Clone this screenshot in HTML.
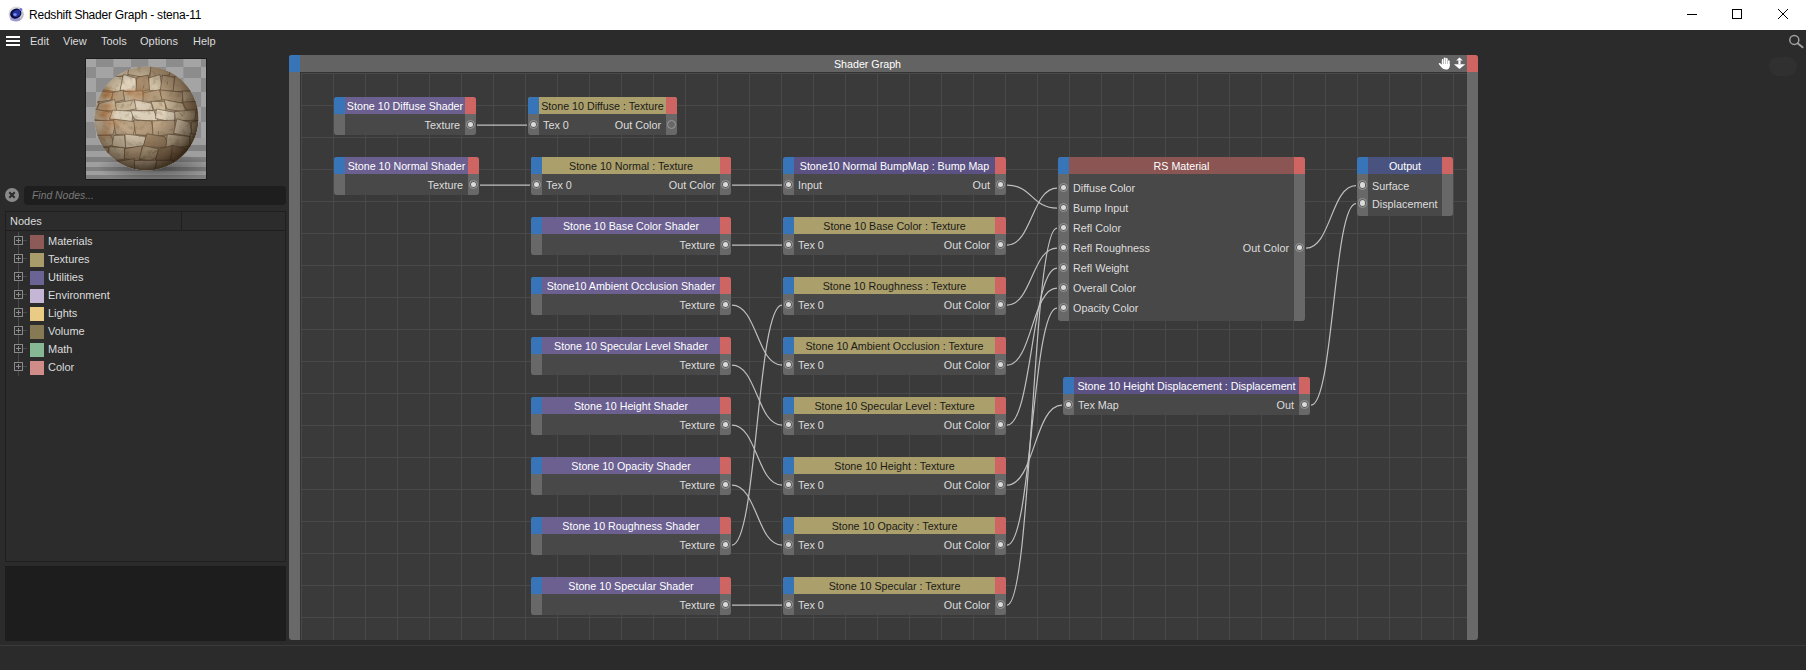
<!DOCTYPE html>
<html><head><meta charset="utf-8"><style>
*{box-sizing:border-box;margin:0;padding:0}
html,body{width:1806px;height:670px;overflow:hidden;background:#2b2b2b;font-family:"Liberation Sans", sans-serif;}
.abs{position:absolute}
#title{position:absolute;left:0;top:0;width:1806px;height:30px;background:#fff}
#title .t{position:absolute;left:29px;top:8px;font-size:12px;letter-spacing:-0.22px;color:#000;white-space:nowrap;line-height:15px}
#menu span{position:absolute;top:34px;font-size:11px;color:#dcdcdc;line-height:14px}
#prev{position:absolute;left:86px;top:59px;width:120px;height:120px;overflow:hidden;background:#8a8a8a;outline:1px solid #1c1c1c}
#search{position:absolute;left:24px;top:186px;width:262px;height:19px;background:#1e1e1e;border-radius:4px}
#search span{position:absolute;left:8px;top:2px;font-size:10.4px;font-style:italic;color:#7a7a7a;line-height:15px}
#tree{position:absolute;left:5px;top:211px;width:281px;height:351px;background:#2c2c2c;border:1px solid #1f1f1f}
#treehd{position:absolute;left:0;top:0;width:279px;height:19px;border-bottom:1px solid #1f1f1f}
#treehd span{position:absolute;left:4px;top:2px;font-size:11px;color:#dcdcdc;line-height:15px}
#treehd b{position:absolute;left:175px;top:0;width:1px;height:19px;background:#1f1f1f}
.ti{position:absolute;left:0;width:270px;height:18px}
.ti .ex{position:absolute;left:8px;top:4px;width:9px;height:9px;border:1px solid #8a8a8a;background:#2c2c2c}
.ti .ex::before{content:"";position:absolute;left:1px;top:3px;width:5px;height:1px;background:#8a8a8a}
.ti .ex::after{content:"";position:absolute;left:3px;top:1px;width:1px;height:5px;background:#8a8a8a}
.ti .vl{position:absolute;left:12px;top:0;width:1px;height:18px;background:#4a4a4a}
.ti .hl{position:absolute;left:17px;top:8px;width:4px;height:1px;background:#4a4a4a}
.ti .sw{position:absolute;left:24px;top:3px;width:14px;height:14px}
.ti span{position:absolute;left:42px;top:2px;font-size:11px;color:#dcdcdc;line-height:15px}
#bpanel{position:absolute;left:5px;top:566px;width:281px;height:75px;background:#1d1d1d}
#graph{position:absolute;left:289px;top:55px;width:1189px;height:585px;background:#696969;border-radius:3px;overflow:hidden}
#ghd{position:absolute;left:0;top:0;width:1189px;height:17px;background:#636363}
#ghd span{position:absolute;left:0;width:1157px;text-align:center;top:2px;font-size:10.7px;color:#fff;line-height:15px}
#gbl{position:absolute;left:0;top:0;width:11px;height:17px;background:#3875b8}
#grd{position:absolute;left:11px;top:17px;width:1167px;height:568px;background-color:#3a3a3a;
 background-image:linear-gradient(to right,#494949 1px,transparent 1px),linear-gradient(to bottom,#494949 1px,transparent 1px);
 background-size:32px 32px;background-position:1px 1px}
#grd .bt{position:absolute;left:0;top:0;width:100%;height:1px;background:#333}
#grd .bll{position:absolute;left:0;top:0;width:1px;height:100%;background:#333}
#wires{position:absolute;left:0;top:0;width:1167px;height:568px}
#wires path{fill:none;stroke:#c0c0c0;stroke-width:1.2}
.nd{position:absolute;border-radius:3px;overflow:hidden;background:#484848}
.hd{position:absolute;left:0;top:0;width:100%;height:17px;font-size:10.7px;line-height:17px;text-align:center;white-space:nowrap}
.hd span{position:absolute;left:11px;right:11px;top:1px;text-align:center}
.hd .bl{position:absolute;left:0;top:0;width:11px;height:17px;background:#3875b8}
.hd .rd{position:absolute;right:0;top:0;width:11px;height:17px;background:#cf6563}
.bd{position:absolute;left:0;top:17px;width:100%;background:#484848}
.bd .ls{position:absolute;left:0;top:0;width:11px;height:100%;background:#686868}
.bd .rs{position:absolute;right:0;top:0;width:11px;height:100%;background:#686868}
.lt{position:absolute;left:15px;font-size:10.8px;color:#dedede;white-space:nowrap}
.rt{position:absolute;right:16px;font-size:10.8px;color:#dedede;white-space:nowrap}
.pt{position:absolute;width:9.6px;height:9.6px;border-radius:50%;border:1px solid #9a9a9a;background:#5a5a5a}
.pt::after{content:"";position:absolute;left:1.05px;top:1.05px;width:5.5px;height:5.5px;border-radius:50%;background:#dadada}
.pt.hol{background:transparent}
.pt.hol::after{display:none}
</style></head><body>
<div id="title">
 <svg class="abs" style="left:4px;top:4px" width="24" height="24" viewBox="4 4 24 24"><defs><radialGradient id="c4g" cx="0.45" cy="0.35" r="0.7"><stop offset="0" stop-color="#f4f4f8"/><stop offset="0.7" stop-color="#c8c8d4"/><stop offset="1" stop-color="#9a9ab0"/></radialGradient></defs>
<circle cx="16.2" cy="14" r="7.6" fill="url(#c4g)"/>
<ellipse cx="15.2" cy="19" rx="5" ry="2.2" fill="#8a80d8" opacity="0.6"/>
<ellipse cx="15.8" cy="13.6" rx="5.8" ry="4.9" fill="#0c0c3a" transform="rotate(-25 15.8 13.6)"/>
<ellipse cx="16.4" cy="13.4" rx="3.9" ry="3.3" fill="#2233a0" transform="rotate(-25 16.4 13.4)"/>
<ellipse cx="15" cy="14.6" rx="1.8" ry="1.3" fill="#7f90f0"/>
<circle cx="20.8" cy="9.6" r="1.5" fill="#6c74d4"/>
</svg>
 <span class="t">Redshift Shader Graph - stena-11</span>
 <svg class="abs" style="left:1680px;top:0" width="126" height="30">
  <line x1="7" y1="14.5" x2="17" y2="14.5" stroke="#000" stroke-width="1"/>
  <rect x="52.5" y="9.5" width="9" height="9" stroke="#000" fill="none" stroke-width="1"/>
  <path d="M98,9 L108,19 M108,9 L98,19" stroke="#000" stroke-width="1"/>
 </svg>
</div>
<div id="menu">
 <svg class="abs" style="left:6px;top:36px" width="14" height="11"><rect x="0" y="0" width="14" height="2" fill="#fff"/><rect x="0" y="4" width="14" height="2" fill="#fff"/><rect x="0" y="8" width="14" height="2" fill="#fff"/></svg>
 <span style="left:30px">Edit</span><span style="left:63px">View</span><span style="left:101px">Tools</span><span style="left:140px">Options</span><span style="left:193px">Help</span>
</div>
<div id="prev"><svg width="120" height="120" viewBox="0 0 120 120" style="position:absolute;left:0;top:0"><defs><clipPath id="sph"><circle cx="60.5" cy="59.5" r="52"/></clipPath><filter id="bl" x="-5%" y="-5%" width="110%" height="110%"><feGaussianBlur stdDeviation="0.7"/></filter><filter id="bl2"><feGaussianBlur stdDeviation="0.5"/></filter><radialGradient id="shade" cx="0.42" cy="0.38" r="0.62"><stop offset="0" stop-color="#ffffff" stop-opacity="0.12"/><stop offset="0.4" stop-color="#000000" stop-opacity="0"/><stop offset="0.7" stop-color="#201408" stop-opacity="0.3"/><stop offset="0.9" stop-color="#201408" stop-opacity="0.6"/><stop offset="1" stop-color="#201408" stop-opacity="0.8"/></radialGradient><radialGradient id="shad" cx="0.5" cy="0.5" r="0.5"><stop offset="0" stop-color="#000" stop-opacity="0.45"/><stop offset="1" stop-color="#000" stop-opacity="0"/></radialGradient><filter id="nz" x="0" y="0" width="100%" height="100%"><feTurbulence type="fractalNoise" baseFrequency="0.18" numOctaves="3" seed="5"/><feColorMatrix type="matrix" values="0 0 0 0 0.25  0 0 0 0 0.17  0 0 0 0 0.1  -2.2 0 0 0 1.05"/></filter><radialGradient id="rust" cx="0.5" cy="0.5" r="0.5"><stop offset="0" stop-color="#a8642c" stop-opacity="0.55"/><stop offset="1" stop-color="#a8642c" stop-opacity="0"/></radialGradient></defs><g filter="url(#bl2)"><rect x="-5" y="-5" width="130" height="130" fill="#989898"/><rect x="-7.5" y="-5" width="17.5" height="13" fill="#a4a4a4"/><rect x="10.0" y="-5" width="17.5" height="13" fill="#8c8c8c"/><rect x="27.5" y="-5" width="17.5" height="13" fill="#a4a4a4"/><rect x="45.0" y="-5" width="17.5" height="13" fill="#8c8c8c"/><rect x="62.5" y="-5" width="17.5" height="13" fill="#a4a4a4"/><rect x="80.0" y="-5" width="17.5" height="13" fill="#8c8c8c"/><rect x="97.5" y="-5" width="17.5" height="13" fill="#a4a4a4"/><rect x="115.0" y="-5" width="17.5" height="13" fill="#8c8c8c"/><rect x="132.5" y="-5" width="17.5" height="13" fill="#a4a4a4"/><rect x="-7.5" y="8" width="17.5" height="11" fill="#8c8c8c"/><rect x="10.0" y="8" width="17.5" height="11" fill="#a4a4a4"/><rect x="27.5" y="8" width="17.5" height="11" fill="#8c8c8c"/><rect x="45.0" y="8" width="17.5" height="11" fill="#a4a4a4"/><rect x="62.5" y="8" width="17.5" height="11" fill="#8c8c8c"/><rect x="80.0" y="8" width="17.5" height="11" fill="#a4a4a4"/><rect x="97.5" y="8" width="17.5" height="11" fill="#8c8c8c"/><rect x="115.0" y="8" width="17.5" height="11" fill="#a4a4a4"/><rect x="132.5" y="8" width="17.5" height="11" fill="#8c8c8c"/><rect x="-7.5" y="19" width="17.5" height="14" fill="#a4a4a4"/><rect x="10.0" y="19" width="17.5" height="14" fill="#8c8c8c"/><rect x="27.5" y="19" width="17.5" height="14" fill="#a4a4a4"/><rect x="45.0" y="19" width="17.5" height="14" fill="#8c8c8c"/><rect x="62.5" y="19" width="17.5" height="14" fill="#a4a4a4"/><rect x="80.0" y="19" width="17.5" height="14" fill="#8c8c8c"/><rect x="97.5" y="19" width="17.5" height="14" fill="#a4a4a4"/><rect x="115.0" y="19" width="17.5" height="14" fill="#8c8c8c"/><rect x="132.5" y="19" width="17.5" height="14" fill="#a4a4a4"/><rect x="-7.5" y="33" width="17.5" height="15" fill="#8c8c8c"/><rect x="10.0" y="33" width="17.5" height="15" fill="#a4a4a4"/><rect x="27.5" y="33" width="17.5" height="15" fill="#8c8c8c"/><rect x="45.0" y="33" width="17.5" height="15" fill="#a4a4a4"/><rect x="62.5" y="33" width="17.5" height="15" fill="#8c8c8c"/><rect x="80.0" y="33" width="17.5" height="15" fill="#a4a4a4"/><rect x="97.5" y="33" width="17.5" height="15" fill="#8c8c8c"/><rect x="115.0" y="33" width="17.5" height="15" fill="#a4a4a4"/><rect x="132.5" y="33" width="17.5" height="15" fill="#8c8c8c"/><rect x="-7.5" y="48" width="17.5" height="15" fill="#a4a4a4"/><rect x="10.0" y="48" width="17.5" height="15" fill="#8c8c8c"/><rect x="27.5" y="48" width="17.5" height="15" fill="#a4a4a4"/><rect x="45.0" y="48" width="17.5" height="15" fill="#8c8c8c"/><rect x="62.5" y="48" width="17.5" height="15" fill="#a4a4a4"/><rect x="80.0" y="48" width="17.5" height="15" fill="#8c8c8c"/><rect x="97.5" y="48" width="17.5" height="15" fill="#a4a4a4"/><rect x="115.0" y="48" width="17.5" height="15" fill="#8c8c8c"/><rect x="132.5" y="48" width="17.5" height="15" fill="#a4a4a4"/><rect x="-7.5" y="63" width="17.5" height="16" fill="#8c8c8c"/><rect x="10.0" y="63" width="17.5" height="16" fill="#a4a4a4"/><rect x="27.5" y="63" width="17.5" height="16" fill="#8c8c8c"/><rect x="45.0" y="63" width="17.5" height="16" fill="#a4a4a4"/><rect x="62.5" y="63" width="17.5" height="16" fill="#8c8c8c"/><rect x="80.0" y="63" width="17.5" height="16" fill="#a4a4a4"/><rect x="97.5" y="63" width="17.5" height="16" fill="#8c8c8c"/><rect x="115.0" y="63" width="17.5" height="16" fill="#a4a4a4"/><rect x="132.5" y="63" width="17.5" height="16" fill="#8c8c8c"/><rect x="-5" y="79" width="130" height="7" fill="#9f9f9f"/><rect x="-5" y="86" width="130" height="6" fill="#808080"/><rect x="-5" y="92" width="130" height="6" fill="#9f9f9f"/><rect x="-5" y="98" width="130" height="5" fill="#808080"/><rect x="-5" y="103" width="130" height="5" fill="#9f9f9f"/><rect x="-5" y="108" width="130" height="4" fill="#808080"/><rect x="-5" y="112" width="130" height="4" fill="#9f9f9f"/><rect x="-5" y="116" width="130" height="4" fill="#808080"/><rect x="-5" y="120" width="130" height="5" fill="#9f9f9f"/><ellipse cx="70.5" cy="108.5" rx="60" ry="15" fill="url(#shad)"/></g><g clip-path="url(#sph)"><g filter="url(#bl)"><rect x="0" y="0" width="120" height="120" fill="#b9a486"/><polygon points="1.6,5.5 25.2,5.5 24.5,16.0 1.9,18.5" fill="#cfbd9f" stroke="#54402c" stroke-width="0.8" stroke-opacity="0.7"/><polygon points="25.3,4.2 42.4,6.8 42.8,15.8 24.4,18.6" fill="#cfbd9f" stroke="#54402c" stroke-width="0.8" stroke-opacity="0.7"/><polygon points="43.4,3.7 66.2,7.3 62.4,19.1 41.8,15.4" fill="#c7b396" stroke="#54402c" stroke-width="0.8" stroke-opacity="0.7"/><polygon points="64.8,6.8 82.4,4.2 85.8,15.4 63.8,19.1" fill="#b59c7c" stroke="#54402c" stroke-width="0.8" stroke-opacity="0.7"/><polygon points="85.2,4.8 103.7,6.2 102.9,16.0 83.0,18.4" fill="#b59c7c" stroke="#54402c" stroke-width="0.8" stroke-opacity="0.7"/><polygon points="103.3,6.1 122.8,4.9 123.1,16.3 103.3,18.1" fill="#cfbd9f" stroke="#54402c" stroke-width="0.8" stroke-opacity="0.7"/><polygon points="-2.3,16.1 18.1,18.3 19.8,30.5 -0.8,33.9" fill="#c4b091" stroke="#54402c" stroke-width="0.8" stroke-opacity="0.7"/><polygon points="20.3,16.8 37.5,17.7 33.9,33.6 17.5,30.8" fill="#d2c2a6" stroke="#54402c" stroke-width="0.8" stroke-opacity="0.7"/><polygon points="37.4,15.4 49.8,19.0 50.8,33.0 34.0,31.4" fill="#e0d3bc" stroke="#54402c" stroke-width="0.8" stroke-opacity="0.7"/><polygon points="50.8,18.3 62.2,16.1 64.1,30.5 49.8,33.8" fill="#a98d6d" stroke="#54402c" stroke-width="0.8" stroke-opacity="0.7"/><polygon points="62.8,18.9 73.9,15.5 76.8,33.0 63.5,31.4" fill="#d2c2a6" stroke="#54402c" stroke-width="0.8" stroke-opacity="0.7"/><polygon points="76.5,15.9 88.3,18.5 87.8,32.0 74.1,32.4" fill="#b59c7c" stroke="#54402c" stroke-width="0.8" stroke-opacity="0.7"/><polygon points="89.1,16.9 111.4,17.5 112.3,31.8 87.0,32.6" fill="#b59c7c" stroke="#54402c" stroke-width="0.8" stroke-opacity="0.7"/><polygon points="113.3,19.1 124.3,15.3 123.5,34.2 110.4,30.2" fill="#d2c2a6" stroke="#54402c" stroke-width="0.8" stroke-opacity="0.7"/><polygon points="4.3,30.6 28.0,33.8 24.1,41.3 3.2,43.6" fill="#cbb899" stroke="#54402c" stroke-width="0.8" stroke-opacity="0.7"/><polygon points="26.5,33.5 37.7,30.9 38.6,40.7 25.6,44.2" fill="#b59c7c" stroke="#54402c" stroke-width="0.8" stroke-opacity="0.7"/><polygon points="37.1,32.6 56.6,31.8 57.6,42.3 39.2,42.6" fill="#c7b396" stroke="#54402c" stroke-width="0.8" stroke-opacity="0.7"/><polygon points="57.4,33.7 73.7,30.7 76.2,41.1 56.8,43.8" fill="#b59c7c" stroke="#54402c" stroke-width="0.8" stroke-opacity="0.7"/><polygon points="73.9,30.9 97.7,33.4 95.8,44.2 75.9,40.7" fill="#b59c7c" stroke="#54402c" stroke-width="0.8" stroke-opacity="0.7"/><polygon points="96.3,32.1 115.3,32.3 118.7,40.6 97.2,44.3" fill="#c4b091" stroke="#54402c" stroke-width="0.8" stroke-opacity="0.7"/><polygon points="-2.2,41.5 13.1,43.4 10.5,52.1 -3.9,51.3" fill="#cbb899" stroke="#54402c" stroke-width="0.8" stroke-opacity="0.7"/><polygon points="13.5,44.4 28.6,40.5 31.5,51.6 10.1,51.8" fill="#c7b396" stroke="#54402c" stroke-width="0.8" stroke-opacity="0.7"/><polygon points="29.2,44.1 48.2,40.8 50.6,49.8 30.9,53.6" fill="#cbb899" stroke="#54402c" stroke-width="0.8" stroke-opacity="0.7"/><polygon points="48.4,40.6 65.5,44.3 67.2,51.8 50.4,51.6" fill="#dacbb2" stroke="#54402c" stroke-width="0.8" stroke-opacity="0.7"/><polygon points="64.9,42.3 78.8,42.7 80.1,52.6 67.8,50.8" fill="#cfbd9f" stroke="#54402c" stroke-width="0.8" stroke-opacity="0.7"/><polygon points="78.0,40.6 96.5,44.3 100.4,53.3 80.9,50.0" fill="#cbb899" stroke="#54402c" stroke-width="0.8" stroke-opacity="0.7"/><polygon points="96.6,43.0 122.0,41.9 122.1,52.6 100.4,50.8" fill="#a98d6d" stroke="#54402c" stroke-width="0.8" stroke-opacity="0.7"/><polygon points="7.1,49.9 26.8,53.5 23.3,62.5 8.2,60.6" fill="#dacbb2" stroke="#54402c" stroke-width="0.8" stroke-opacity="0.7"/><polygon points="26.7,51.1 47.3,52.3 45.8,63.1 23.4,59.9" fill="#e0d3bc" stroke="#54402c" stroke-width="0.8" stroke-opacity="0.7"/><polygon points="44.7,51.7 68.0,51.7 71.9,62.2 48.5,60.9" fill="#e0d3bc" stroke="#54402c" stroke-width="0.8" stroke-opacity="0.7"/><polygon points="70.4,50.0 89.5,53.4 88.4,63.5 69.5,59.5" fill="#e0d3bc" stroke="#54402c" stroke-width="0.8" stroke-opacity="0.7"/><polygon points="88.5,52.6 110.0,50.7 109.3,61.3 89.4,61.7" fill="#cfbd9f" stroke="#54402c" stroke-width="0.8" stroke-opacity="0.7"/><polygon points="110.6,49.8 123.1,53.6 122.2,61.4 108.6,61.6" fill="#b59c7c" stroke="#54402c" stroke-width="0.8" stroke-opacity="0.7"/><polygon points="7.8,61.4 30.1,61.6 26.9,75.7 6.5,76.8" fill="#dacbb2" stroke="#54402c" stroke-width="0.8" stroke-opacity="0.7"/><polygon points="27.3,60.2 50.3,62.8 47.0,76.9 29.7,75.6" fill="#bea586" stroke="#54402c" stroke-width="0.8" stroke-opacity="0.7"/><polygon points="47.6,61.1 65.6,61.9 67.6,76.8 49.7,75.7" fill="#b59c7c" stroke="#54402c" stroke-width="0.8" stroke-opacity="0.7"/><polygon points="66.2,61.8 88.5,61.2 89.9,74.8 67.1,77.7" fill="#bea586" stroke="#54402c" stroke-width="0.8" stroke-opacity="0.7"/><polygon points="90.8,59.7 103.7,63.3 107.1,78.2 87.6,74.3" fill="#dacbb2" stroke="#54402c" stroke-width="0.8" stroke-opacity="0.7"/><polygon points="105.3,63.2 120.1,59.8 117.4,75.8 105.5,76.7" fill="#cfbd9f" stroke="#54402c" stroke-width="0.8" stroke-opacity="0.7"/><polygon points="6.6,76.1 25.1,76.4 28.5,86.3 2.8,90.1" fill="#c7b396" stroke="#54402c" stroke-width="0.8" stroke-opacity="0.7"/><polygon points="27.6,76.5 38.5,76.0 40.0,89.4 26.0,87.0" fill="#d2c2a6" stroke="#54402c" stroke-width="0.8" stroke-opacity="0.7"/><polygon points="38.9,75.0 60.1,77.5 57.9,87.3 39.7,89.1" fill="#dacbb2" stroke="#54402c" stroke-width="0.8" stroke-opacity="0.7"/><polygon points="60.9,74.7 79.0,77.8 82.1,88.4 57.0,88.1" fill="#a98d6d" stroke="#54402c" stroke-width="0.8" stroke-opacity="0.7"/><polygon points="81.3,75.0 103.9,77.5 104.1,86.9 79.8,89.5" fill="#d2c2a6" stroke="#54402c" stroke-width="0.8" stroke-opacity="0.7"/><polygon points="104.2,74.4 124.0,78.1 126.2,89.3 103.9,87.1" fill="#cfbd9f" stroke="#54402c" stroke-width="0.8" stroke-opacity="0.7"/><polygon points="3.3,87.8 22.8,88.6 20.5,103.0 1.2,99.8" fill="#c4b091" stroke="#54402c" stroke-width="0.8" stroke-opacity="0.7"/><polygon points="23.2,87.8 38.4,88.7 38.8,100.2 20.1,102.6" fill="#d2c2a6" stroke="#54402c" stroke-width="0.8" stroke-opacity="0.7"/><polygon points="38.8,89.7 56.3,86.7 53.9,103.2 38.3,99.6" fill="#bea586" stroke="#54402c" stroke-width="0.8" stroke-opacity="0.7"/><polygon points="57.0,86.6 72.5,89.8 69.5,102.6 53.1,100.2" fill="#c4b091" stroke="#54402c" stroke-width="0.8" stroke-opacity="0.7"/><polygon points="72.6,90.1 87.5,86.3 83.6,101.5 69.4,101.2" fill="#a98d6d" stroke="#54402c" stroke-width="0.8" stroke-opacity="0.7"/><polygon points="86.4,86.3 100.7,90.1 100.7,99.5 84.7,103.2" fill="#a98d6d" stroke="#54402c" stroke-width="0.8" stroke-opacity="0.7"/><polygon points="101.8,88.2 117.4,88.3 121.2,102.6 99.6,100.2" fill="#c4b091" stroke="#54402c" stroke-width="0.8" stroke-opacity="0.7"/><polygon points="8.8,103.1 26.4,99.7 26.6,115.0 7.3,111.0" fill="#cfbd9f" stroke="#54402c" stroke-width="0.8" stroke-opacity="0.7"/><polygon points="27.2,103.2 48.5,99.6 48.6,114.8 25.7,111.2" fill="#c4b091" stroke="#54402c" stroke-width="0.8" stroke-opacity="0.7"/><polygon points="48.3,101.6 71.0,101.2 68.3,113.2 48.8,112.7" fill="#dacbb2" stroke="#54402c" stroke-width="0.8" stroke-opacity="0.7"/><polygon points="71.0,101.6 87.2,101.2 88.7,112.5 68.3,113.4" fill="#c7b396" stroke="#54402c" stroke-width="0.8" stroke-opacity="0.7"/><polygon points="89.3,103.3 102.5,99.5 102.3,113.3 86.5,112.7" fill="#b59c7c" stroke="#54402c" stroke-width="0.8" stroke-opacity="0.7"/><polygon points="100.9,99.4 118.9,103.4 119.8,113.1 104.0,112.8" fill="#d2c2a6" stroke="#54402c" stroke-width="0.8" stroke-opacity="0.7"/><line x1="61.9" y1="50.6" x2="66.8" y2="51.3" stroke="#5a4532" stroke-width="0.7" opacity="0.6"/><line x1="59.7" y1="76.7" x2="52.7" y2="77.2" stroke="#5a4532" stroke-width="0.7" opacity="0.6"/><line x1="52.7" y1="100.6" x2="59.5" y2="97.8" stroke="#5a4532" stroke-width="0.7" opacity="0.6"/><line x1="58.1" y1="25.9" x2="57.0" y2="29.7" stroke="#5a4532" stroke-width="0.7" opacity="0.6"/><line x1="96.5" y1="57.4" x2="93.6" y2="53.7" stroke="#5a4532" stroke-width="0.7" opacity="0.6"/><line x1="71.1" y1="97.8" x2="65.2" y2="101.1" stroke="#5a4532" stroke-width="0.7" opacity="0.6"/><line x1="17.6" y1="32.0" x2="13.2" y2="34.2" stroke="#5a4532" stroke-width="0.7" opacity="0.6"/><line x1="44.5" y1="46.5" x2="46.4" y2="41.7" stroke="#5a4532" stroke-width="0.7" opacity="0.6"/><line x1="81.3" y1="25.6" x2="81.4" y2="22.6" stroke="#5a4532" stroke-width="0.7" opacity="0.6"/><line x1="33.3" y1="62.2" x2="32.3" y2="60.7" stroke="#5a4532" stroke-width="0.7" opacity="0.6"/><line x1="52.7" y1="62.1" x2="47.3" y2="58.6" stroke="#5a4532" stroke-width="0.7" opacity="0.6"/><line x1="72.3" y1="72.0" x2="72.8" y2="76.2" stroke="#5a4532" stroke-width="0.7" opacity="0.6"/><line x1="70.6" y1="91.6" x2="66.3" y2="94.5" stroke="#5a4532" stroke-width="0.7" opacity="0.6"/><line x1="88.4" y1="95.7" x2="85.5" y2="93.5" stroke="#5a4532" stroke-width="0.7" opacity="0.6"/><ellipse cx="52.4" cy="35.2" rx="13.0" ry="8.4" fill="url(#rust)"/><ellipse cx="20.9" cy="36.6" rx="11.1" ry="5.3" fill="url(#rust)"/><ellipse cx="19.4" cy="73.9" rx="9.0" ry="7.9" fill="url(#rust)"/><ellipse cx="20.5" cy="46.9" rx="10.8" ry="4.1" fill="url(#rust)"/><ellipse cx="23.5" cy="64.5" rx="12.4" ry="8.8" fill="url(#rust)"/><ellipse cx="20.1" cy="53.4" rx="11.3" ry="6.5" fill="url(#rust)"/><ellipse cx="42.9" cy="33.4" rx="6.5" ry="4.5" fill="url(#rust)"/><ellipse cx="17.0" cy="56.3" rx="9.6" ry="6.8" fill="url(#rust)"/><ellipse cx="21.4" cy="33.1" rx="7.4" ry="8.2" fill="url(#rust)"/><rect x="0" y="0" width="120" height="120" filter="url(#nz)" opacity="0.55"/><circle cx="60.5" cy="59.5" r="52" fill="url(#shade)"/></g></g></svg></div>
<svg class="abs" style="left:4px;top:187px" width="16" height="16"><circle cx="8" cy="8" r="7" fill="#8a8a8a"/><path d="M5.3,5.3 L10.7,10.7 M10.7,5.3 L5.3,10.7" stroke="#2b2b2b" stroke-width="2"/></svg>
<div id="search"><span>Find Nodes...</span></div>
<div id="tree"><div id="treehd"><span>Nodes</span><b></b></div>
<div class="ti" style="top:20px"><i class="vl"></i><i class="hl"></i><i class="ex"></i><i class="sw" style="background:#8e5a58"></i><span>Materials</span></div>
<div class="ti" style="top:38px"><i class="vl"></i><i class="hl"></i><i class="ex"></i><i class="sw" style="background:#a89c6a"></i><span>Textures</span></div>
<div class="ti" style="top:56px"><i class="vl"></i><i class="hl"></i><i class="ex"></i><i class="sw" style="background:#6a6494"></i><span>Utilities</span></div>
<div class="ti" style="top:74px"><i class="vl"></i><i class="hl"></i><i class="ex"></i><i class="sw" style="background:#c6b6d6"></i><span>Environment</span></div>
<div class="ti" style="top:92px"><i class="vl"></i><i class="hl"></i><i class="ex"></i><i class="sw" style="background:#e9cb86"></i><span>Lights</span></div>
<div class="ti" style="top:110px"><i class="vl"></i><i class="hl"></i><i class="ex"></i><i class="sw" style="background:#857a54"></i><span>Volume</span></div>
<div class="ti" style="top:128px"><i class="vl"></i><i class="hl"></i><i class="ex"></i><i class="sw" style="background:#86b896"></i><span>Math</span></div>
<div class="ti" style="top:146px"><i class="vl"></i><i class="hl"></i><i class="ex"></i><i class="sw" style="background:#cf8c88"></i><span>Color</span></div>
</div>
<div id="bpanel"></div>
<div id="graph">
 <div id="ghd"><span>Shader Graph</span></div>
 <div id="gbl"></div>
 <div class="abs" style="left:1178px;top:0;width:11px;height:17px;background:#cf6563"></div>
 <div id="grd"><b class="bt"></b><b class="bll"></b>
  <svg id="wires" width="1167" height="568">
<path d="M177.0,53.1 C202.0,53.1 202.0,53.1 227.0,53.1"/>
<path d="M180.0,113.1 C205.0,113.1 205.0,113.1 230.0,113.1"/>
<path d="M432.0,113.1 C457.0,113.1 457.0,113.1 482.0,113.1"/>
<path d="M707.0,113.1 C732.0,113.1 732.0,136.1 757.0,136.1"/>
<path d="M432.0,173.1 C457.0,173.1 457.0,173.1 482.0,173.1"/>
<path d="M707.0,173.1 C732.0,173.1 732.0,116.1 757.0,116.1"/>
<path d="M432.0,233.1 C457.0,233.1 457.0,293.1 482.0,293.1"/>
<path d="M432.0,293.1 C457.0,293.1 457.0,353.1 482.0,353.1"/>
<path d="M432.0,353.1 C457.0,353.1 457.0,413.1 482.0,413.1"/>
<path d="M432.0,413.1 C457.0,413.1 457.0,473.1 482.0,473.1"/>
<path d="M432.0,473.1 C457.0,473.1 457.0,233.1 482.0,233.1"/>
<path d="M432.0,533.1 C457.0,533.1 457.0,533.1 482.0,533.1"/>
<path d="M707.0,233.1 C732.0,233.1 732.0,176.1 757.0,176.1"/>
<path d="M707.0,293.1 C732.0,293.1 732.0,216.1 757.0,216.1"/>
<path d="M707.0,353.1 C732.0,353.1 732.0,196.1 757.0,196.1"/>
<path d="M707.0,413.1 C734.5,413.1 734.5,333.1 762.0,333.1"/>
<path d="M707.0,473.1 C732.0,473.1 732.0,236.1 757.0,236.1"/>
<path d="M707.0,533.1 C732.0,533.1 732.0,156.1 757.0,156.1"/>
<path d="M1006.0,176.1 C1031.0,176.1 1031.0,113.6 1056.0,113.6"/>
<path d="M1011.0,333.1 C1033.5,333.1 1033.5,131.6 1056.0,131.6"/>
  </svg>
<div class="nd" style="left:34px;top:25px;width:142px;height:38px"><div class="hd" style="background:#6b6090;color:#ffffff"><b class="bl"></b><span>Stone 10 Diffuse Shader</span><b class="rd"></b></div><div class="bd" style="height:21px"><b class="ls"></b><b class="rs"></b><span class="rt" style="top:1.0px;height:21px;line-height:21px">Texture</span></div><i class="pt" style="left:131.7px;top:22.7px"></i></div>
<div class="nd" style="left:34px;top:85px;width:145px;height:38px"><div class="hd" style="background:#6b6090;color:#ffffff"><b class="bl"></b><span>Stone 10 Normal Shader</span><b class="rd"></b></div><div class="bd" style="height:21px"><b class="ls"></b><b class="rs"></b><span class="rt" style="top:1.0px;height:21px;line-height:21px">Texture</span></div><i class="pt" style="left:134.7px;top:22.7px"></i></div>
<div class="nd" style="left:228px;top:25px;width:149px;height:38px"><div class="hd" style="background:#ab9f6b;color:#1a1a1a"><b class="bl"></b><span>Stone 10 Diffuse : Texture</span><b class="rd"></b></div><div class="bd" style="height:21px"><b class="ls"></b><b class="rs"></b><span class="lt" style="top:1.0px;height:21px;line-height:21px">Tex 0</span><span class="rt" style="top:1.0px;height:21px;line-height:21px">Out Color</span></div><i class="pt" style="left:0.7px;top:22.7px"></i><i class="pt hol" style="left:138.7px;top:22.7px"></i></div>
<div class="nd" style="left:231px;top:85px;width:200px;height:38px"><div class="hd" style="background:#ab9f6b;color:#1a1a1a"><b class="bl"></b><span>Stone 10 Normal : Texture</span><b class="rd"></b></div><div class="bd" style="height:21px"><b class="ls"></b><b class="rs"></b><span class="lt" style="top:1.0px;height:21px;line-height:21px">Tex 0</span><span class="rt" style="top:1.0px;height:21px;line-height:21px">Out Color</span></div><i class="pt" style="left:0.7px;top:22.7px"></i><i class="pt" style="left:189.7px;top:22.7px"></i></div>
<div class="nd" style="left:231px;top:145px;width:200px;height:38px"><div class="hd" style="background:#6b6090;color:#ffffff"><b class="bl"></b><span>Stone 10 Base Color Shader</span><b class="rd"></b></div><div class="bd" style="height:21px"><b class="ls"></b><b class="rs"></b><span class="rt" style="top:1.0px;height:21px;line-height:21px">Texture</span></div><i class="pt" style="left:189.7px;top:22.7px"></i></div>
<div class="nd" style="left:231px;top:205px;width:200px;height:38px"><div class="hd" style="background:#6b6090;color:#ffffff"><b class="bl"></b><span>Stone10 Ambient Occlusion Shader</span><b class="rd"></b></div><div class="bd" style="height:21px"><b class="ls"></b><b class="rs"></b><span class="rt" style="top:1.0px;height:21px;line-height:21px">Texture</span></div><i class="pt" style="left:189.7px;top:22.7px"></i></div>
<div class="nd" style="left:231px;top:265px;width:200px;height:38px"><div class="hd" style="background:#6b6090;color:#ffffff"><b class="bl"></b><span>Stone 10 Specular Level Shader</span><b class="rd"></b></div><div class="bd" style="height:21px"><b class="ls"></b><b class="rs"></b><span class="rt" style="top:1.0px;height:21px;line-height:21px">Texture</span></div><i class="pt" style="left:189.7px;top:22.7px"></i></div>
<div class="nd" style="left:231px;top:325px;width:200px;height:38px"><div class="hd" style="background:#6b6090;color:#ffffff"><b class="bl"></b><span>Stone 10 Height Shader</span><b class="rd"></b></div><div class="bd" style="height:21px"><b class="ls"></b><b class="rs"></b><span class="rt" style="top:1.0px;height:21px;line-height:21px">Texture</span></div><i class="pt" style="left:189.7px;top:22.7px"></i></div>
<div class="nd" style="left:231px;top:385px;width:200px;height:38px"><div class="hd" style="background:#6b6090;color:#ffffff"><b class="bl"></b><span>Stone 10 Opacity Shader</span><b class="rd"></b></div><div class="bd" style="height:21px"><b class="ls"></b><b class="rs"></b><span class="rt" style="top:1.0px;height:21px;line-height:21px">Texture</span></div><i class="pt" style="left:189.7px;top:22.7px"></i></div>
<div class="nd" style="left:231px;top:445px;width:200px;height:38px"><div class="hd" style="background:#6b6090;color:#ffffff"><b class="bl"></b><span>Stone 10 Roughness Shader</span><b class="rd"></b></div><div class="bd" style="height:21px"><b class="ls"></b><b class="rs"></b><span class="rt" style="top:1.0px;height:21px;line-height:21px">Texture</span></div><i class="pt" style="left:189.7px;top:22.7px"></i></div>
<div class="nd" style="left:231px;top:505px;width:200px;height:38px"><div class="hd" style="background:#6b6090;color:#ffffff"><b class="bl"></b><span>Stone 10 Specular Shader</span><b class="rd"></b></div><div class="bd" style="height:21px"><b class="ls"></b><b class="rs"></b><span class="rt" style="top:1.0px;height:21px;line-height:21px">Texture</span></div><i class="pt" style="left:189.7px;top:22.7px"></i></div>
<div class="nd" style="left:483px;top:85px;width:223px;height:38px"><div class="hd" style="background:#5b5283;color:#ffffff"><b class="bl"></b><span>Stone10 Normal BumpMap : Bump Map</span><b class="rd"></b></div><div class="bd" style="height:21px"><b class="ls"></b><b class="rs"></b><span class="lt" style="top:1.0px;height:21px;line-height:21px">Input</span><span class="rt" style="top:1.0px;height:21px;line-height:21px">Out</span></div><i class="pt" style="left:0.7px;top:22.7px"></i><i class="pt" style="left:212.7px;top:22.7px"></i></div>
<div class="nd" style="left:483px;top:145px;width:223px;height:38px"><div class="hd" style="background:#ab9f6b;color:#1a1a1a"><b class="bl"></b><span>Stone 10 Base Color : Texture</span><b class="rd"></b></div><div class="bd" style="height:21px"><b class="ls"></b><b class="rs"></b><span class="lt" style="top:1.0px;height:21px;line-height:21px">Tex 0</span><span class="rt" style="top:1.0px;height:21px;line-height:21px">Out Color</span></div><i class="pt" style="left:0.7px;top:22.7px"></i><i class="pt" style="left:212.7px;top:22.7px"></i></div>
<div class="nd" style="left:483px;top:205px;width:223px;height:38px"><div class="hd" style="background:#ab9f6b;color:#1a1a1a"><b class="bl"></b><span>Stone 10 Roughness : Texture</span><b class="rd"></b></div><div class="bd" style="height:21px"><b class="ls"></b><b class="rs"></b><span class="lt" style="top:1.0px;height:21px;line-height:21px">Tex 0</span><span class="rt" style="top:1.0px;height:21px;line-height:21px">Out Color</span></div><i class="pt" style="left:0.7px;top:22.7px"></i><i class="pt" style="left:212.7px;top:22.7px"></i></div>
<div class="nd" style="left:483px;top:265px;width:223px;height:38px"><div class="hd" style="background:#ab9f6b;color:#1a1a1a"><b class="bl"></b><span>Stone 10 Ambient Occlusion : Texture</span><b class="rd"></b></div><div class="bd" style="height:21px"><b class="ls"></b><b class="rs"></b><span class="lt" style="top:1.0px;height:21px;line-height:21px">Tex 0</span><span class="rt" style="top:1.0px;height:21px;line-height:21px">Out Color</span></div><i class="pt" style="left:0.7px;top:22.7px"></i><i class="pt" style="left:212.7px;top:22.7px"></i></div>
<div class="nd" style="left:483px;top:325px;width:223px;height:38px"><div class="hd" style="background:#ab9f6b;color:#1a1a1a"><b class="bl"></b><span>Stone 10 Specular Level : Texture</span><b class="rd"></b></div><div class="bd" style="height:21px"><b class="ls"></b><b class="rs"></b><span class="lt" style="top:1.0px;height:21px;line-height:21px">Tex 0</span><span class="rt" style="top:1.0px;height:21px;line-height:21px">Out Color</span></div><i class="pt" style="left:0.7px;top:22.7px"></i><i class="pt" style="left:212.7px;top:22.7px"></i></div>
<div class="nd" style="left:483px;top:385px;width:223px;height:38px"><div class="hd" style="background:#ab9f6b;color:#1a1a1a"><b class="bl"></b><span>Stone 10 Height : Texture</span><b class="rd"></b></div><div class="bd" style="height:21px"><b class="ls"></b><b class="rs"></b><span class="lt" style="top:1.0px;height:21px;line-height:21px">Tex 0</span><span class="rt" style="top:1.0px;height:21px;line-height:21px">Out Color</span></div><i class="pt" style="left:0.7px;top:22.7px"></i><i class="pt" style="left:212.7px;top:22.7px"></i></div>
<div class="nd" style="left:483px;top:445px;width:223px;height:38px"><div class="hd" style="background:#ab9f6b;color:#1a1a1a"><b class="bl"></b><span>Stone 10 Opacity : Texture</span><b class="rd"></b></div><div class="bd" style="height:21px"><b class="ls"></b><b class="rs"></b><span class="lt" style="top:1.0px;height:21px;line-height:21px">Tex 0</span><span class="rt" style="top:1.0px;height:21px;line-height:21px">Out Color</span></div><i class="pt" style="left:0.7px;top:22.7px"></i><i class="pt" style="left:212.7px;top:22.7px"></i></div>
<div class="nd" style="left:483px;top:505px;width:223px;height:38px"><div class="hd" style="background:#ab9f6b;color:#1a1a1a"><b class="bl"></b><span>Stone 10 Specular : Texture</span><b class="rd"></b></div><div class="bd" style="height:21px"><b class="ls"></b><b class="rs"></b><span class="lt" style="top:1.0px;height:21px;line-height:21px">Tex 0</span><span class="rt" style="top:1.0px;height:21px;line-height:21px">Out Color</span></div><i class="pt" style="left:0.7px;top:22.7px"></i><i class="pt" style="left:212.7px;top:22.7px"></i></div>
<div class="nd" style="left:758px;top:85px;width:247px;height:164px"><div class="hd" style="background:#8a5553;color:#ffffff"><b class="bl"></b><span>RS Material</span><b class="rd"></b></div><div class="bd" style="height:147px"><b class="ls"></b><b class="rs"></b><span class="lt" style="top:3.5px;height:20px;line-height:20px">Diffuse Color</span><span class="lt" style="top:23.5px;height:20px;line-height:20px">Bump Input</span><span class="lt" style="top:43.5px;height:20px;line-height:20px">Refl Color</span><span class="lt" style="top:63.5px;height:20px;line-height:20px">Refl Roughness</span><span class="rt" style="top:63.5px;height:20px;line-height:20px">Out Color</span><span class="lt" style="top:83.5px;height:20px;line-height:20px">Refl Weight</span><span class="lt" style="top:103.5px;height:20px;line-height:20px">Overall Color</span><span class="lt" style="top:123.5px;height:20px;line-height:20px">Opacity Color</span></div><i class="pt" style="left:0.7px;top:25.7px"></i><i class="pt" style="left:0.7px;top:45.7px"></i><i class="pt" style="left:0.7px;top:65.7px"></i><i class="pt" style="left:0.7px;top:85.7px"></i><i class="pt" style="left:236.7px;top:85.7px"></i><i class="pt" style="left:0.7px;top:105.7px"></i><i class="pt" style="left:0.7px;top:125.7px"></i><i class="pt" style="left:0.7px;top:145.7px"></i></div>
<div class="nd" style="left:763px;top:305px;width:247px;height:38px"><div class="hd" style="background:#5b5283;color:#ffffff"><b class="bl"></b><span>Stone 10 Height Displacement : Displacement</span><b class="rd"></b></div><div class="bd" style="height:21px"><b class="ls"></b><b class="rs"></b><span class="lt" style="top:1.0px;height:21px;line-height:21px">Tex Map</span><span class="rt" style="top:1.0px;height:21px;line-height:21px">Out</span></div><i class="pt" style="left:0.7px;top:22.7px"></i><i class="pt" style="left:236.7px;top:22.7px"></i></div>
<div class="nd" style="left:1057px;top:85px;width:96px;height:59px"><div class="hd" style="background:#4a5380;color:#ffffff"><b class="bl"></b><span>Output</span><b class="rd"></b></div><div class="bd" style="height:42px"><b class="ls"></b><b class="rs"></b><span class="lt" style="top:3.0px;height:18px;line-height:18px">Surface</span><span class="lt" style="top:21.0px;height:18px;line-height:18px">Displacement</span></div><i class="pt" style="left:0.7px;top:23.2px"></i><i class="pt" style="left:0.7px;top:41.2px"></i></div>
 </div>
</div>
<svg class="abs" style="left:1436px;top:55px" width="32" height="17" viewBox="0 0 32 17"><g fill="#fff">
<rect x="5.8" y="4.1" width="1.7" height="7" rx="0.85"/><rect x="7.9" y="2.5" width="1.7" height="8" rx="0.85"/><rect x="9.95" y="3" width="1.7" height="8" rx="0.85"/><rect x="12" y="5.2" width="1.7" height="6" rx="0.85"/>
<path d="M5.8,9 L13.7,9 L13.7,11.5 Q13.4,14.6 9.8,14.6 Q7,14.6 5.6,12.6 L2.9,9.2 Q2.4,8.3 3.2,8 Q3.9,7.8 4.6,8.5 L5.8,9.8 Z"/>
<path d="M20.2,5.6 L23.5,2.5 L26.8,5.6 Z"/><rect x="22.4" y="5.4" width="2.2" height="4"/><path d="M17.9,9.2 L29.2,9.2 L23.5,14.1 Z"/></g></svg>
<div class="abs" style="left:0;top:645px;width:1806px;height:1px;background:#3a3a3a"></div>
<svg class="abs" style="left:1786px;top:32px" width="20" height="20"><circle cx="8.3" cy="7.9" r="4.5" stroke="#a0a0a0" stroke-width="1.5" fill="none"/><path d="M11.6,11.3 L16.6,15.3" stroke="#a0a0a0" stroke-width="1.9" stroke-linecap="round"/></svg>
<div class="abs" style="left:1769px;top:57px;width:28px;height:19px;border-radius:9px;background:#303030"></div>
</body></html>
